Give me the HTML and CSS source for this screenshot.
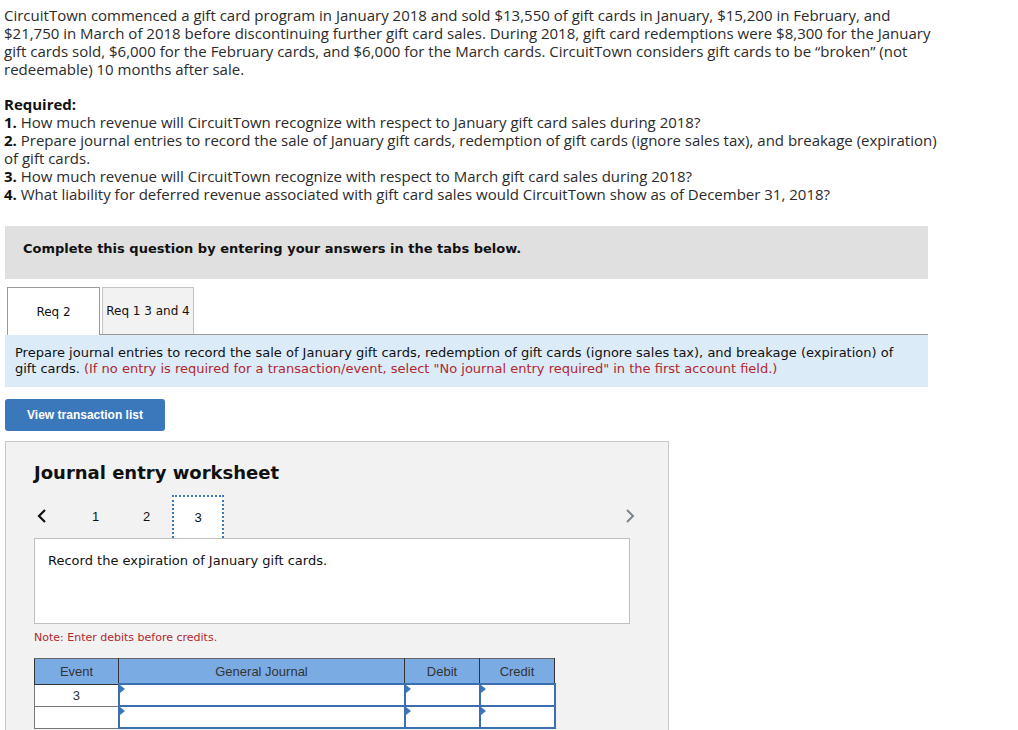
FILE: index.html
```html
<!DOCTYPE html>
<html lang="en">
<head>
    <meta charset="UTF-8">
    <title>Gift card question</title>
    <link rel="stylesheet" href="styles.css">
</head>
<body>

<div class="question">
    <p class="intro">CircuitTown commenced a gift card program in January 2018 and sold $13,550 of gift cards in January, $15,200 in February, and $21,750 in March of 2018 before discontinuing further gift card sales. During 2018, gift card redemptions were $8,300 for the January gift cards sold, $6,000 for the February cards, and $6,000 for the March cards. CircuitTown considers gift cards to be &ldquo;broken&rdquo; (not redeemable) 10 months after sale.</p>

    <div class="required">
        <b>Required:</b><br>
        <b>1.</b> How much revenue will CircuitTown recognize with respect to January gift card sales during 2018?<br>
        <b>2.</b> Prepare journal entries to record the sale of January gift cards, redemption of gift cards (ignore sales tax), and breakage (expiration) of gift cards.<br>
        <b>3.</b> How much revenue will CircuitTown recognize with respect to March gift card sales during 2018?<br>
        <b>4.</b> What liability for deferred revenue associated with gift card sales would CircuitTown show as of December 31, 2018?
    </div>
</div>

<div class="banner">Complete this question by entering your answers in the tabs below.</div>

<div class="tabs">
    <div class="tab active">Req 2</div>
    <div class="tab">Req 1 3 and 4</div>
</div>

<div class="instructions">
    Prepare journal entries to record the sale of January gift cards, redemption of gift cards (ignore sales tax), and breakage (expiration) of gift cards. <span class="hint">(If no entry is required for a transaction/event, select "No journal entry required" in the first account field.)</span>
</div>

<button class="view-btn">View transaction list</button>

<div class="worksheet">
    <h2>Journal entry worksheet</h2>

    <div class="pager">
        <span class="arrow prev">
            <svg width="12" height="16" viewBox="0 0 12 16"><path d="M9 2 L3 8 L9 14" fill="none" stroke="#111" stroke-width="2.2"/></svg>
        </span>
        <span class="page">1</span>
        <span class="page">2</span>
        <span class="page current">3</span>
        <span class="arrow next">
            <svg width="12" height="16" viewBox="0 0 12 16"><path d="M3 2 L9 8 L3 14" fill="none" stroke="#7b8590" stroke-width="2"/></svg>
        </span>
    </div>

    <div class="event-box">Record the expiration of January gift cards.</div>

    <div class="note">Note: Enter debits before credits.</div>

    <table class="journal">
        <thead>
            <tr>
                <th class="col-event">Event</th>
                <th class="col-account">General Journal</th>
                <th class="col-amt">Debit</th>
                <th class="col-amt">Credit</th>
            </tr>
        </thead>
        <tbody>
            <tr>
                <td class="event">3</td>
                <td class="input"></td>
                <td class="input"></td>
                <td class="input"></td>
            </tr>
            <tr>
                <td class="event"></td>
                <td class="input"></td>
                <td class="input"></td>
                <td class="input"></td>
            </tr>
        </tbody>
    </table>
</div>

</body>
</html>
```

FILE: styles.css
```css
body {
    margin: 0;
    padding: 0;
    font-family: "Open Sans", Lato, sans-serif;
    color: #2b2b2b;
    background: #fff;
}
.question {
    padding: 6px 4px 0 4px;
    width: 944px;
    font-size: 15px;
    line-height: 18px;
}
.intro {
    margin: 0 0 17px 0;
}
.required b {
    color: #111;
}
.banner {
    margin: 23px 0 0 5px;
    width: 923px;
    height: 53px;
    box-sizing: border-box;
    padding: 15px 18px;
    background-color: #e0e0e0;
    font-family: "DejaVu Sans", Verdana, sans-serif;
    font-size: 13px;
    font-weight: bold;
    color: #111;
}
.tabs {
    display: flex;
    margin: 8px 0 0 7px;
    width: 921px;
    border-bottom: 1px solid #999;
    height: 47px;
}
.tab {
    width: 92px;
    box-sizing: border-box;
    border: 1px solid #c4c4c4;
    border-bottom: none;
    background-color: #f2f2f2;
    font-family: "DejaVu Sans", Verdana, sans-serif;
    font-size: 12px;
    color: #111;
    display: flex;
    align-items: center;
    justify-content: center;
    margin-right: 2px;
}
.tab.active {
    width: 93px;
    background-color: #fff;
    border-color: #999;
    height: 48px;
}
.instructions {
    margin-left: 5px;
    width: 923px;
    box-sizing: border-box;
    padding: 10px 10px 10px 10px;
    background-color: #dbebf8;
    font-family: "DejaVu Sans", Verdana, sans-serif;
    font-size: 13px;
    line-height: 16px;
    color: #111;
}
.hint {
    color: #b0282e;
}
.view-btn {
    display: block;
    margin: 12px 0 0 5px;
    width: 160px;
    height: 32px;
    border: none;
    border-radius: 3px;
    background-color: #3b77bb;
    color: #fff;
    font-family: "Liberation Sans", Arial, sans-serif;
    font-size: 12px;
    font-weight: bold;
    cursor: pointer;
}
.worksheet {
    margin: 10px 0 0 5px;
    width: 664px;
    height: 300px;
    box-sizing: border-box;
    border: 1px solid #c8c8c8;
    border-bottom: none;
    background-color: #f2f2f2;
    padding: 0 0 0 28px;
}
.worksheet h2 {
    margin: 20px 0 0 0;
    font-family: "DejaVu Sans", Verdana, sans-serif;
    font-size: 18px;
    font-weight: bold;
    color: #111;
}
.pager {
    display: flex;
    align-items: center;
    height: 44px;
    margin-top: 11px;
    width: 602px;
    font-family: "Liberation Sans", Arial, sans-serif;
    font-size: 13px;
    color: #111;
}
.arrow {
    display: flex;
    align-items: center;
}
.prev {
    margin-left: 2px;
    width: 34px;
}
.next {
    margin-left: auto;
}
.page {
    width: 51px;
    text-align: center;
}
.page.current {
    width: 52px;
    height: 43px;
    box-sizing: border-box;
    border: 2px dotted #3b77bb;
    border-bottom: none;
    background-color: #fff;
    display: flex;
    align-items: center;
    justify-content: center;
    margin-top: 1px;
}
.event-box {
    width: 596px;
    height: 86px;
    box-sizing: border-box;
    border: 1px solid #bfbfbf;
    background-color: #fff;
    padding: 14px 13px;
    font-family: "DejaVu Sans", Verdana, sans-serif;
    font-size: 13px;
    color: #111;
}
.note {
    margin-top: 7px;
    font-family: "DejaVu Sans", Verdana, sans-serif;
    font-size: 11px;
    color: #b0282e;
}
.journal {
    margin-top: 14px;
    border-collapse: collapse;
    font-family: "Liberation Sans", Arial, sans-serif;
    font-size: 13px;
}
.journal th {
    background-color: #7aace3;
    color: #333;
    font-weight: normal;
    height: 24px;
    padding: 0;
    border: 1px solid #333;
    border-top-color: #666;
}
.col-event {
    width: 83px;
}
.col-account {
    width: 285px;
}
.col-amt {
    width: 74px;
}
.journal td {
    height: 20px;
    padding: 0;
    background: #fff;
}
.journal td.event {
    text-align: center;
    border: 1px solid #777;
    border-top: none;
    color: #333;
}
.journal td.input {
    border: 2px solid #3b6fb0;
    position: relative;
}
.journal td.input::before {
    content: "";
    position: absolute;
    left: 0;
    top: 0;
    border-left: 5px solid #3b77bb;
    border-top: 4px solid transparent;
    border-bottom: 4px solid transparent;
}
```
